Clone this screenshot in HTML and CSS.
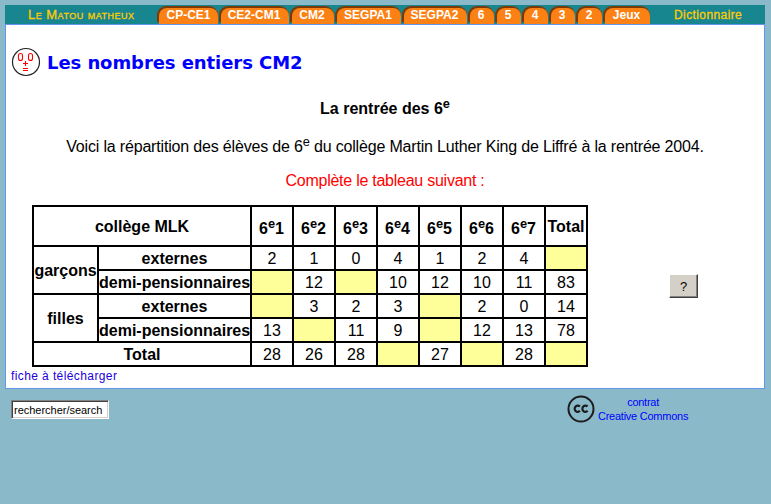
FILE: index.html
```html
<!DOCTYPE html>
<html lang="fr">
<head>
<meta charset="utf-8">
<title>Les nombres entiers CM2</title>
<link rel="stylesheet" href="styles.css">
</head>
<body>
<nav class="nav">
  <a class="brand">Le Matou matheux</a>
  <div class="tabs">
    <a class="tab w62"><span>CP-CE1</span></a><a class="tab w71"><span>CE2-CM1</span></a><a class="tab w45"><span>CM2</span></a><a class="tab w67"><span>SEGPA1</span></a><a class="tab w66"><span>SEGPA2</span></a><a class="tab"><span>6</span></a><a class="tab"><span>5</span></a><a class="tab"><span>4</span></a><a class="tab"><span>3</span></a><a class="tab"><span>2</span></a><a class="tab w48"><span>Jeux</span></a>
  </div>
  <a class="dico">Dictionnaire</a>
</nav>
<main class="page">
  <header class="heading">
    <svg class="face" width="30" height="30" viewBox="0 0 30 30">
      <circle cx="15" cy="15" r="13.5" fill="#fff" stroke="#222" stroke-width="1.2"/>
      <g fill="none" stroke="#f00" stroke-width="1.1">
        <rect x="7.5" y="6.5" width="4" height="7" rx="2"/>
        <rect x="17.5" y="6.5" width="4" height="7" rx="2"/>
        <path d="M12 16.5h5M14.5 14v5M12 21.5h5M12 23.5h5"/>
      </g>
    </svg>
    <h1>Les nombres entiers CM2</h1>
  </header>
  <h2>La rentrée des 6<sup>e</sup></h2>
  <p class="intro">Voici la répartition des élèves de 6<sup>e</sup> du collège Martin Luther King de Liffré à la rentrée 2004.</p>
  <p class="task">Complète le tableau suivant :</p>
  <div class="exercise">
    <table>
      <colgroup><col class="c1"><col class="c2"><col span="8" class="cn"></colgroup>
      <tr class="head"><th colspan="2">collège MLK</th><th class="level">6<sup>e</sup>1</th><th class="level">6<sup>e</sup>2</th><th class="level">6<sup>e</sup>3</th><th class="level">6<sup>e</sup>4</th><th class="level">6<sup>e</sup>5</th><th class="level">6<sup>e</sup>6</th><th class="level">6<sup>e</sup>7</th><th>Total</th></tr>
      <tr><th rowspan="2">garçons</th><th>externes</th><td>2</td><td>1</td><td>0</td><td>4</td><td>1</td><td>2</td><td>4</td><td class="blank"></td></tr>
      <tr><th>demi-pensionnaires</th><td class="blank"></td><td>12</td><td class="blank"></td><td>10</td><td>12</td><td>10</td><td>11</td><td>83</td></tr>
      <tr><th rowspan="2">filles</th><th>externes</th><td class="blank"></td><td>3</td><td>2</td><td>3</td><td class="blank"></td><td>2</td><td>0</td><td>14</td></tr>
      <tr><th>demi-pensionnaires</th><td>13</td><td class="blank"></td><td>11</td><td>9</td><td class="blank"></td><td>12</td><td>13</td><td>78</td></tr>
      <tr><th colspan="2">Total</th><td>28</td><td>26</td><td>28</td><td class="blank"></td><td>27</td><td class="blank"></td><td>28</td><td class="blank"></td></tr>
    </table>
    <button class="help">?</button>
  </div>
  <a class="sheet">fiche à télécharger</a>
</main>
<footer class="footer">
  <input class="search" value="rechercher/search">
  <a class="license">
    <svg width="28" height="28" viewBox="0 0 28 28">
      <circle cx="14" cy="14" r="12.5" fill="none" stroke="#1c1c1c" stroke-width="2"/>
      <g fill="none" stroke="#1c1c1c" stroke-width="2.2">
        <path d="M12.9 11.6A3 3.1 0 1 0 12.9 15.8M20.6 11.6A3 3.1 0 1 0 20.6 15.8"/>
      </g>
    </svg>
    <span>contrat<br>Creative Commons</span>
  </a>
</footer>
</body>
</html>
```
FILE: styles.css
```css
* { box-sizing: border-box; }
body {
  margin: 0;
  padding: 5px 6px 0 5px;
  height: 504px;
  overflow: hidden;
  background: #8abaca;
  font: 16px/18px "Liberation Sans", Arial, sans-serif;
  color: #000;
}
.nav {
  display: flex;
  height: 19px;
  background: #18868f;
  font-size: 12px;
  font-weight: bold;
  line-height: 20px;
  color: #fc0;
}
.brand {
  width: 152px;
  padding-left: 23px;
  font-size: 13px;
  font-variant: small-caps;
  font-weight: normal;
  -webkit-text-stroke: 0.3px #fc0;
  letter-spacing: 0.48px;
  white-space: nowrap;
}
.tabs { display: flex; gap: 1px; padding-top: 1px; }
.tab {
  width: 26px;
  height: 18px;
  padding: 2px 0 0 2px;
  border-radius: 9px 9px 0 0;
  background: linear-gradient(to bottom, #7a3a08 16px, #18868f 16px);
  color: #fff;
  line-height: 14px;
  text-align: center;
}
.tab span {
  display: block;
  height: 16px;
  padding-right: 2px;
  border-radius: 8px 8px 0 0;
  background: #fb8114;
}
.w62 { width: 61px; }
.w71 { width: 70px; }
.w45 { width: 44px; }
.w67 { width: 66px; }
.w66 { width: 65px; }
.w48 { width: 47px; }
.tab.w62 span { padding-right: 0; }
.dico { margin-left: 24px; font-weight: normal; -webkit-text-stroke: 0.3px #fc0; letter-spacing: 0.4px; }
.page {
  height: 365px;
  border: 1px solid #6495ed;
  background: #fff;
}
.heading { display: flex; align-items: center; padding: 22px 0 0 5px; }
.heading h1 {
  margin: 2px 0 0 6px;
  color: #00f;
  font: bold 18px/28px "DejaVu Sans", Verdana, sans-serif;
  letter-spacing: -0.07px;
}
sup { font-size: 12.8px; line-height: 0; vertical-align: 6px; }
h2, p { margin: 0; text-align: center; font-size: 16px; font-weight: normal; line-height: 18px; }
h2 { margin-top: 23px; font-weight: bold; }
.intro { margin-top: 20px; letter-spacing: -0.175px; }
.task { margin-top: 16px; color: #f00; letter-spacing: -0.25px; }
.exercise { display: flex; align-items: center; margin: 15px 0 0 26px; }
table {
  width: 556px;
  table-layout: fixed;
  border-collapse: collapse;
  text-align: center;
}
.c1 { width: 65px; }
.c2 { width: 153px; }
.cn { width: 42px; }
tr { height: 24px; }
.head { height: 40px; }
th, td {
  padding: 1px 0 0;
  border: 2px solid #000;
  line-height: 18px;
  white-space: nowrap;
}
th.level { padding: 5px 1px 0 0; }
.blank { background: #ff9; }
.help {
  width: 29px;
  height: 24px;
  margin-left: 81px;
  padding: 0;
  border: 1px solid;
  border-color: #fff #404040 #404040 #fff;
  box-shadow: inset -1px -1px #808080;
  background: #d4d0c8;
  font: 13px "Liberation Sans", Arial, sans-serif;
}
.sheet { display: block; padding-left: 5px; font-size: 12px; line-height: 18px; color: #20d; letter-spacing: 0.4px; }
.footer { display: flex; align-items: flex-start; }
.search {
  width: 98px;
  height: 19px;
  margin: 11px 0 0 6px;
  padding: 1px 0 0;
  border: 1px solid;
  border-color: #808080 #fff #fff #808080;
  border-radius: 0;
  box-shadow: inset 1px 1px #404040, inset -1px -1px #d4d0c8;
  background: #fff;
  color: #000;
  font: 11px "Liberation Sans", Arial, sans-serif;
  text-indent: 2px;
  letter-spacing: -0.02px;
}
.license {
  display: flex;
  gap: 3px;
  margin: 6px 0 0 458px;
  color: #00f;
  font-size: 11px;
  line-height: 14px;
  letter-spacing: -0.25px;
  text-align: center;
}
```
